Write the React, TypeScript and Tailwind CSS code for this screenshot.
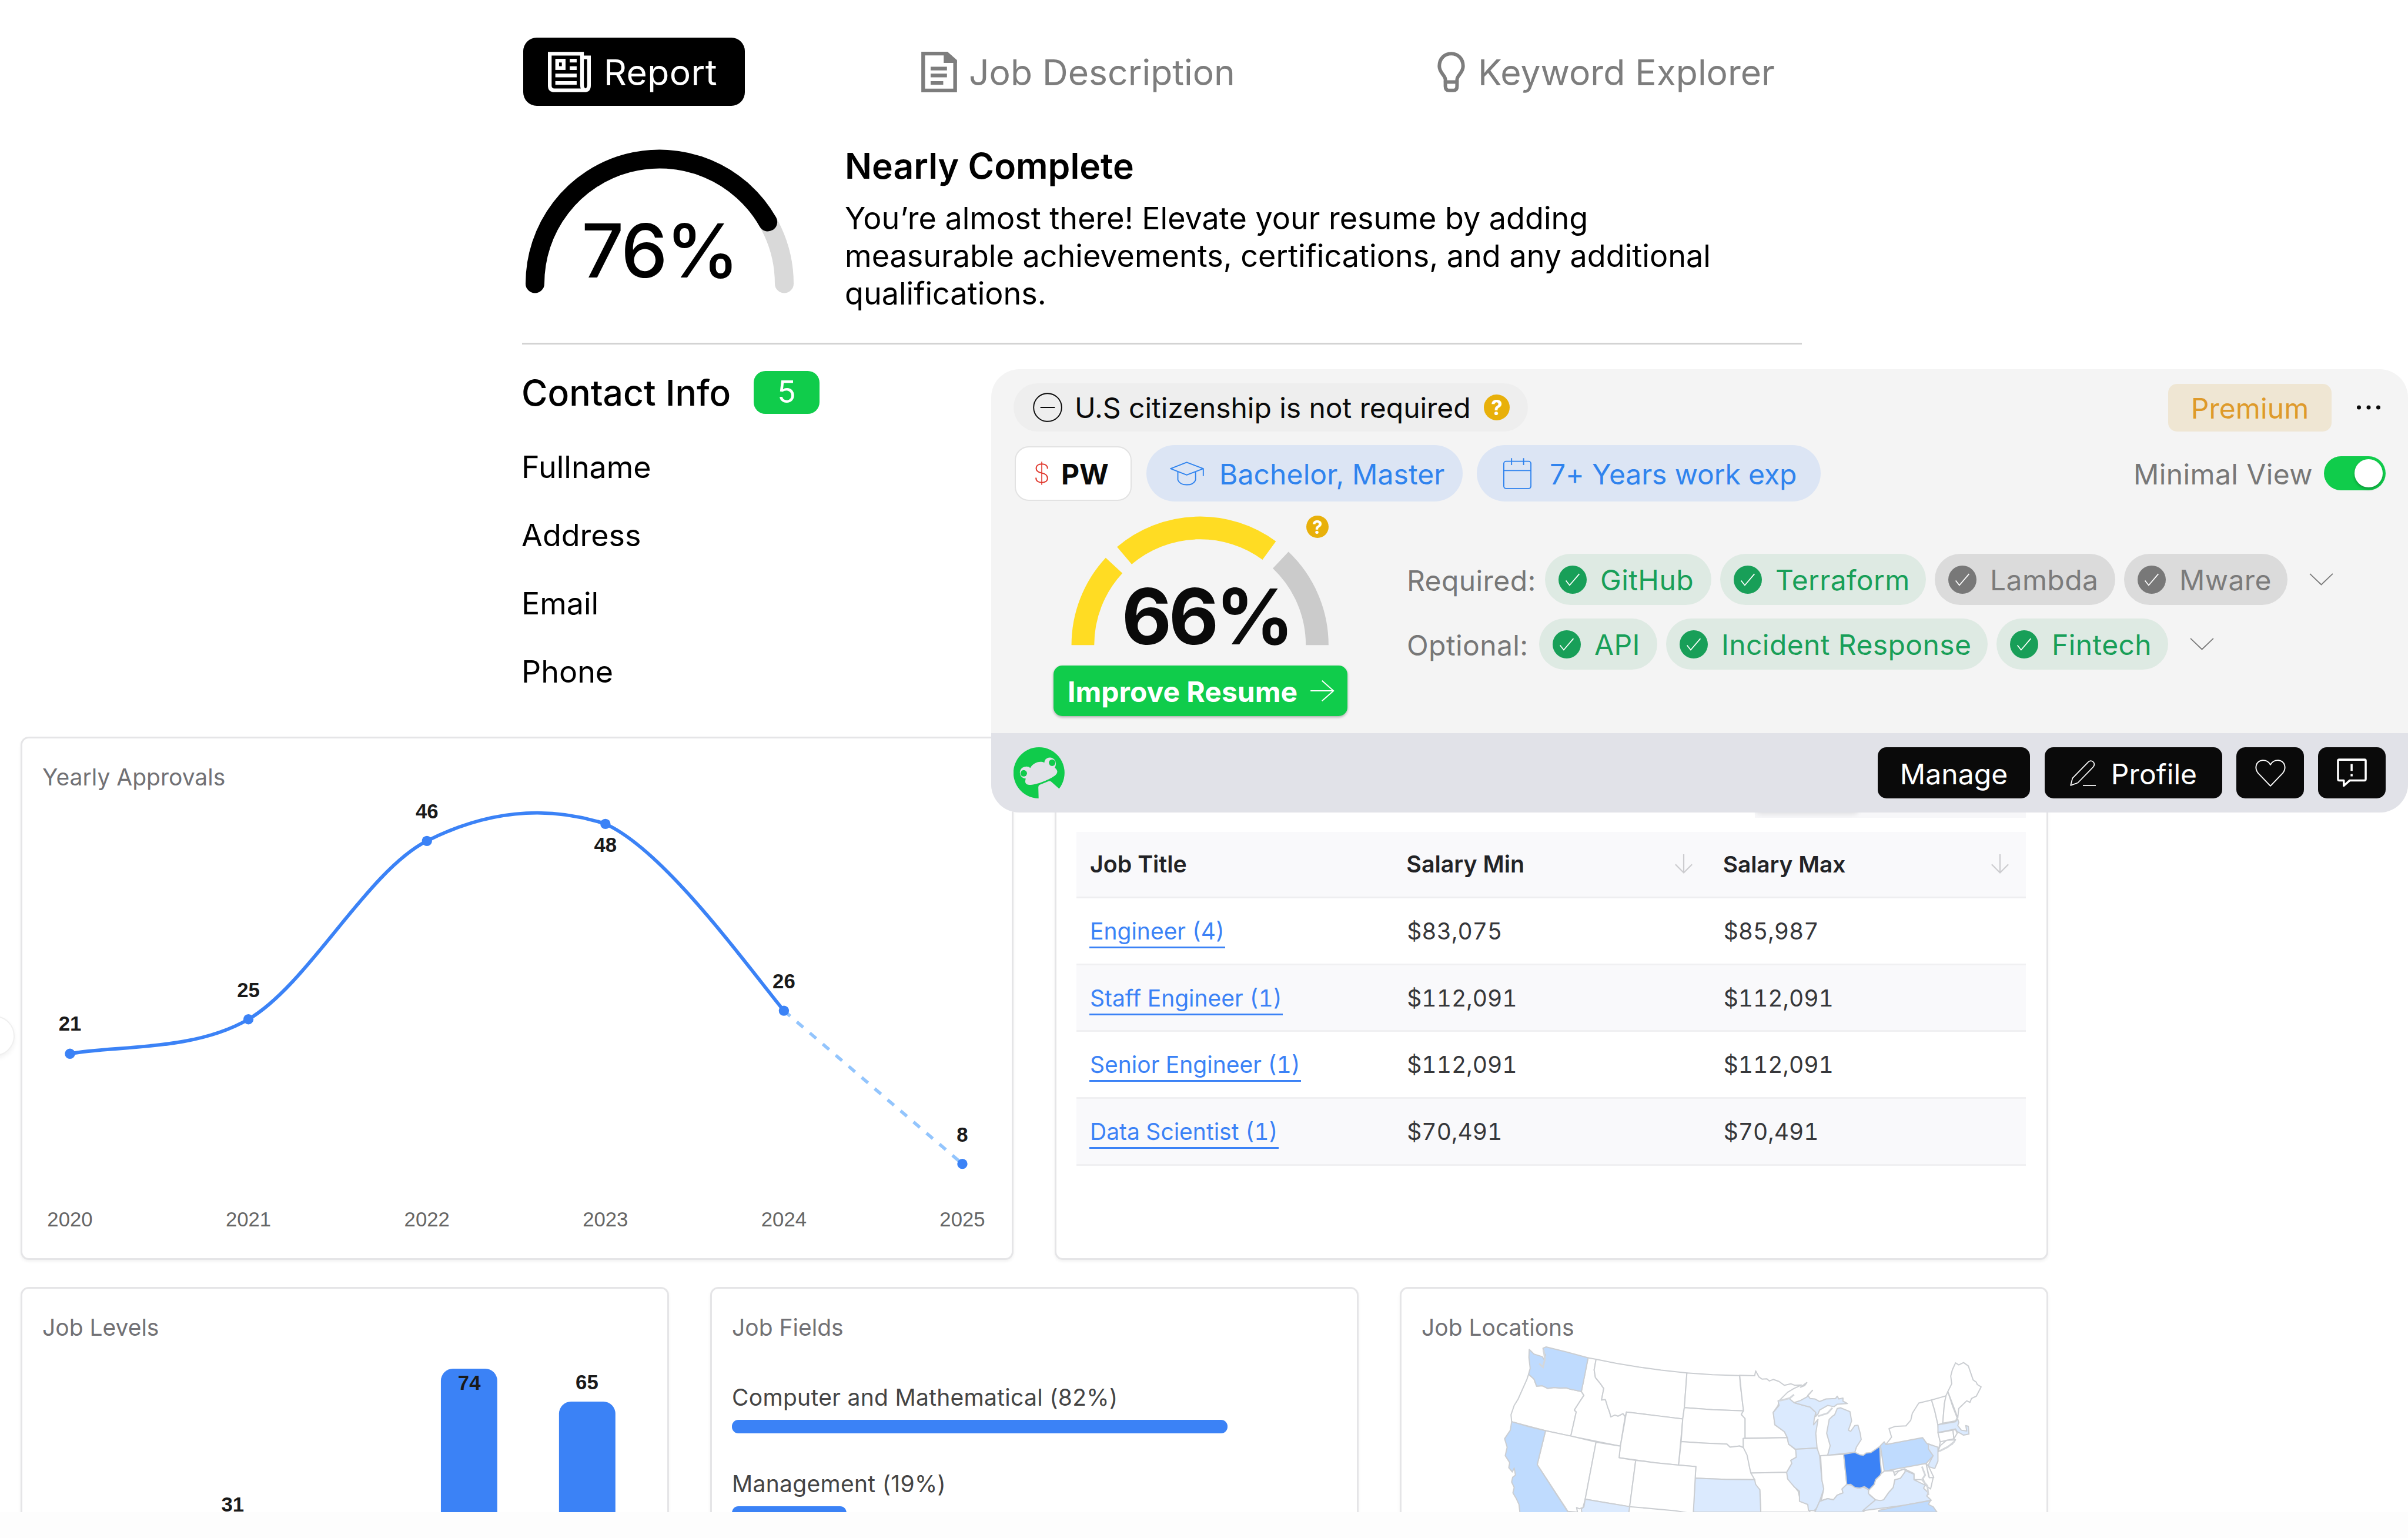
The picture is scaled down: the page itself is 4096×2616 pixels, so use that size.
import React from "react";

/* ---------- icons ---------- */

function NewsIcon() {
  return (
    <svg viewBox="0 0 92.5 87" className="h-[69px] w-[73px]" fill="none" stroke="currentColor" strokeWidth="8">
      <path d="M77.5 12H88.5V72Q88.5 83 79 83H14Q4 83 4 73V4H73.5V72Q73.5 80 80 83" />
      <rect x="20" y="19" width="14" height="16" />
      <path d="M47 19H62M47 35H62M16 51H62M16 67H62" />
    </svg>
  );
}

function DocIcon() {
  return (
    <svg viewBox="0 0 76.5 87" className="h-[69px] w-[61px]" fill="none" stroke="currentColor" strokeWidth="8">
      <path d="M4 4H54L72.5 21V83H4Z" />
      <path d="M48 0H56L76.5 18V24H48Z" fill="currentColor" stroke="none" />
      <path d="M20 36H55M20 51H55M20 67H47" />
    </svg>
  );
}

function BulbIcon() {
  return (
    <svg viewBox="0 0 59 87" className="h-[69px] w-[47px]" fill="none" stroke="currentColor" strokeWidth="7.5">
      <path d="M17 65V60C17 50 4 46 4 31C4 15 15 4 29.5 4S55 15 55 31C55 46 42 50 42 60V65" />
      <path d="M15 65H44M17 64V74Q17 83 25 83H34Q42 83 42 74V64" />
    </svg>
  );
}

function MinusCircle() {
  return (
    <svg viewBox="0 0 63 63" className="size-[50px]" fill="none" stroke="#0a0a0a" strokeWidth="2.4">
      <circle cx="31.5" cy="31.5" r="30" />
      <path d="M16 31.5H47" />
    </svg>
  );
}

function DollarIcon() {
  return (
    <svg viewBox="0 0 28 50" className="h-[40px] w-[22px]" fill="none" stroke="#e0372c" strokeWidth="2.6">
      <path d="M14 0V50" strokeWidth="2" />
      <path d="M26.5 15C26.5 8 21 5 14 5S2 8.500 2 14.500C2 21 7 23 14 24.500S26.500 29 26.500 35.500S21 45 14 45S1.500 42 1.500 34.500" />
    </svg>
  );
}

function CapIcon() {
  return (
    <svg viewBox="0 0 73 51" className="h-[41px] w-[58px]" fill="none" stroke="#2f83ee" strokeWidth="2.4" strokeLinejoin="round">
      <path d="M36 1.500L71.500 15L36 28.500L1.500 15ZM71.500 15V31M17 22V39Q21 49.500 36 49.500T55 39V22" />
    </svg>
  );
}

function CalendarIcon() {
  return (
    <svg viewBox="0 0 61 67" className="h-[53px] w-[48px]" fill="none" stroke="#2f83ee" strokeWidth="2.400">
      <rect x="1.200" y="7" width="58.600" height="58.800" rx="5" />
      <path d="M1 27H60M18 0V15M44 0V15" />
    </svg>
  );
}

function CheckDot({ color }: { color: string }) {
  return (
    <svg viewBox="0 0 61 61" className="size-[48px] shrink-0" fill="none">
      <circle cx="30.500" cy="30.500" r="30.500" fill={color} />
      <path d="M16 32.500L24 42.500L45 18" stroke="#fff" strokeWidth="2.200" />
    </svg>
  );
}

function Chevron() {
  return (
    <svg viewBox="0 0 52 27" className="ml-[22px] h-[21px] w-[41px]" fill="none" stroke="#777" strokeWidth="2.200">
      <path d="M1 1L26 25L51 1" />
    </svg>
  );
}

function RightArrow() {
  return (
    <svg viewBox="0 0 52 46" className="h-[36px] w-[41px]" fill="none" stroke="#fff" strokeWidth="2.400">
      <path d="M0 23H50M25 1L50 23L25 45" />
    </svg>
  );
}

function PencilIcon() {
  return (
    <svg viewBox="0 0 56 56" className="size-[44px]" fill="none" stroke="#fff" strokeWidth="2.200" strokeLinejoin="round">
      <path d="M1.500 54.500L5.500 39L39 4.500Q44 -1 49.500 3T51 14L17 49Z" />
      <path d="M28 54.800H56" />
    </svg>
  );
}

function HeartIcon() {
  return (
    <svg viewBox="0 0 65 58" className="h-[46px] w-[52px]" fill="none" stroke="#fff" strokeWidth="2.400" strokeLinejoin="round">
      <path d="M32.500 56.500L6.500 29.500C-3 18 2 3 15 1.500C23 0.800 29 5 32.500 11C36 5 42 0.800 50 1.500C63 3 68 18 58.500 29.500Z" />
    </svg>
  );
}

function FeedbackIcon() {
  return (
    <svg viewBox="0 0 65 62" className="h-[49px] w-[51px]" fill="none" stroke="#fff" strokeWidth="4.500" strokeLinejoin="round">
      <path d="M5 2.500H60Q62.500 2.500 62.500 5V44Q62.500 47.500 60 47.500H28L15 59V47.500H5Q2.500 47.500 2.500 44V5Q2.500 2.500 5 2.500Z" />
      <path d="M32 12V27M32 33.500V38.500" />
    </svg>
  );
}

function DownArrow() {
  return (
    <svg viewBox="0 0 38 42" className="h-[33px] w-[30px]" fill="none" stroke="#cccccf" strokeWidth="2.800">
      <path d="M19 0V40M1 22L19 40L37 22" />
    </svg>
  );
}

function FrogLogo() {
  return (
    <svg viewBox="72 60 330 330" className="size-[87px]">
      <path
        d="M234 390A165 165 0 1 1 366 327L316 283Q308 276 296 280L242 302Q232 306 232 318Z"
        fill="#10cb4b"
      />
      <path
        d="M150 185Q168 183 180 194C196 164 238 144 271 160C271 140 288 126 307 126C332 127 347 146 345 170Q344 184 338 192Q350 200 354 213C356 232 342 243 322 254C276 280 216 302 172 303Q152 302 148 286Q147 274 151 262C130 262 113 245 113 223C113 202 130 186 150 185Z"
        fill="#e1e2e8"
      />
      <circle cx="138" cy="228" r="21" fill="#10cb4b" />
      <circle cx="321" cy="160" r="21" fill="#10cb4b" />
    </svg>
  );
}

function Help({ small = false }: { small?: boolean }) {
  return (
    <span
      className={
        small
          ? "flex size-[38px] items-center justify-center rounded-full bg-[#e8b00a] text-[31px] leading-none font-bold text-white"
          : "flex size-[44px] items-center justify-center rounded-full bg-[#e8b00a] text-[35px] leading-none font-bold text-white"
      }
    >
      ?
    </span>
  );
}

/* ---------- gauges ---------- */

function arc(cx: number, cy: number, r: number, from: number, to: number) {
  const p = (a: number) => {
    const t = (a * Math.PI) / 180;
    return `${(cx - r * Math.cos(t)).toFixed(2)} ${(cy - r * Math.sin(t)).toFixed(2)}`;
  };
  return `M${p(from)}A${r} ${r} 0 0 1 ${p(to)}`;
}

function CompletionGauge() {
  return (
    <div className="relative mt-1 h-[246px] w-[456px]">
      <svg viewBox="0 0 456 246" className="h-full w-full" fill="none" strokeWidth="32" strokeLinecap="round">
        <path d={arc(228, 228.500, 212, 130, 180)} stroke="#d9d9d9" />
        <path d={arc(228, 228.500, 212, 0, 150.300)} stroke="#000" />
      </svg>
      <div className="absolute inset-x-0 top-[109px] text-center text-[126px] leading-[126px] font-[450] tracking-[-3px]">76%</div>
    </div>
  );
}

function MatchGauge() {
  return (
    <div className="relative h-[221px] w-[500px]">
      <svg viewBox="0 0 633.4 280" className="h-full w-full" fill="none" strokeWidth="49">
        <path d={arc(315.700, 279, 252.500, 0, 42.800)} stroke="#ffdc23" />
        <path d={arc(315.700, 279, 252.500, 49.800, 126.200)} stroke="#ffdc23" />
        <path d={arc(315.700, 279, 252.500, 133.500, 180)} stroke="#cbcbcb" />
      </svg>
      <div className="absolute top-[106px] left-[10px] w-full text-center text-[131px] leading-[132px] font-bold tracking-[-5px] text-[#0a0a0a]">
        66%
      </div>
      <div className="absolute top-0 right-[32px]">
        <Help small />
      </div>
    </div>
  );
}

/* ---------- resume report ---------- */

function ReportSection() {
  return (
    <section className="h-[1253px] w-[3065px] pt-[64px] pl-[888px] text-black">
      <nav className="flex h-[116px] items-center text-[60.6px] leading-none text-[#7d7d7d]">
        <div className="ml-[2px] flex h-full w-[377px] items-center gap-[22px] rounded-[23px] bg-black pl-[42px] text-white">
          <NewsIcon />
          <span className="pt-[3px] tracking-[0.400px]">Report</span>
        </div>
        <div className="ml-[300px] flex w-[878px] items-center gap-[20px]">
          <DocIcon />
          <span className="pt-[3px]">Job Description</span>
        </div>
        <div className="flex items-center gap-[22px] whitespace-nowrap">
          <BulbIcon />
          <span className="pt-[3px]">Keyword Explorer</span>
        </div>
      </nav>
      <div className="mt-[70px] flex h-[336px] border-b-[3px] border-[#d3d3d3] pl-[6px]">
        <div className="h-[300px]">
          <CompletionGauge />
        </div>
        <div className="ml-[87px]">
          <h2 className="text-[60.6px] leading-[64px] font-semibold">Nearly Complete</h2>
          <p className="mt-[26px] w-[1500px] text-[52.100px] leading-[64.2px]">
            You’re almost there! Elevate your resume by adding
            <br />
            measurable achievements, certifications, and any additional
            <br />
            qualifications.
          </p>
        </div>
      </div>
      <div className="-ml-px">
        <div className="mt-[45px] flex h-[72px] items-center">
          <h3 className="w-[395px] pt-[3px] text-[60.700px] leading-none font-medium">Contact Info</h3>
          <span className="flex h-[73px] w-[112px] items-center justify-center rounded-[20px] bg-[#10cc4b] text-[52px] leading-none text-white">
            5
          </span>
        </div>
        <ul className="mt-[34px] text-[52px] leading-[116px]">
          {["Fullname", "Address", "Email", "Phone"].map((f) => (
            <li key={f}>{f}</li>
          ))}
        </ul>
      </div>
    </section>
  );
}

/* ---------- floating job panel ---------- */

function Skill({ label, width, off = false }: { label: string; width: string; off?: boolean }) {
  return (
    <div
      className={`flex h-[87px] items-center gap-[23px] rounded-full pl-[23px] ${width} ${
        off ? "bg-[#dbdbdb] text-[#7b7b7b]" : "bg-[#deeae3] text-[#189f58]"
      }`}
    >
      <CheckDot color={off ? "#787878" : "#189f58"} />
      <span className="pt-[3px] whitespace-nowrap">{label}</span>
    </div>
  );
}

function JobPanel() {
  return (
    <aside className="absolute top-[628px] left-[1686px] h-[753.500px] w-[2410px] overflow-hidden rounded-[48px] bg-[#f4f4f4] text-[48px] leading-none tracking-[0.1px]">
      <div className="flex h-[619px] flex-col pt-[24px] pr-[38px] pl-[38px]">
        <div className="flex h-[82px] items-center">
          <div className="flex h-full w-[875px] items-center rounded-full bg-[#eeeeee] pr-[31px] pl-[33px] text-[#0a0a0a]">
            <MinusCircle />
            <span className="ml-[21px] pt-[2px] tracking-[-0.050px]">U.S citizenship is not required</span>
            <span className="ml-auto">
              <Help />
            </span>
          </div>
          <div className="ml-auto flex h-[81px] w-[278px] items-center justify-center rounded-[15px] bg-[#efe6d3] pt-[3px] text-[#de9a2a]">
            Premium
          </div>
          <svg viewBox="0 0 40 10" className="mr-[9px] ml-[43px] h-[10px] w-[40px]" fill="#0a0a0a">
            <circle cx="3.500" cy="5" r="3.500" />
            <circle cx="20" cy="5" r="3.500" />
            <circle cx="36.500" cy="5" r="3.500" />
          </svg>
        </div>

        <div className="mt-[23px] flex h-[96px] items-center pl-[2px]">
          <div className="flex h-[93px] w-[199px] items-center rounded-[24px] border-2 border-[#e2e2e2] bg-white pl-[33px] text-[#0a0a0a]">
            <DollarIcon />
            <span className="ml-[22px] pt-[4px] font-bold tracking-normal">PW</span>
          </div>
          <div className="ml-[25px] flex h-full w-[538px] items-center gap-[26px] rounded-full bg-[#dce5f4] pl-[40px] text-[#2f83ee]">
            <CapIcon />
            <span className="pt-[4px]">Bachelor, Master</span>
          </div>
          <div className="ml-[24px] flex h-full w-[585px] items-center gap-[31px] rounded-full bg-[#dce5f4] pl-[45px] text-[#2f83ee]">
            <CalendarIcon />
            <span className="pt-[4px] tracking-[-0.1px]">7+ Years work exp</span>
          </div>
          <span className="ml-auto pt-[4px] tracking-[0.400px] text-[#777]">Minimal View</span>
          <div className="ml-[19px] flex h-[58px] w-[105px] items-center justify-end rounded-full bg-[#10cc4b] p-[5px]">
            <span className="size-[48px] rounded-full bg-white shadow-[0_3px_4px_rgba(0,0,0,0.25)]" />
          </div>
        </div>

        <div className="flex">
          <div className="mt-[24px] ml-[68px] w-[500px]">
            <MatchGauge />
            <div className="mt-[34px] flex h-[86px] items-center rounded-[15px] bg-[#10cc4b] pl-[24px] text-[48px] font-bold text-white shadow-[0_2px_4px_rgba(0,0,0,0.3)]">
              <span className="pt-[4px] tracking-normal">Improve Resume</span>
              <span className="mr-[22px] ml-auto">
                <RightArrow />
              </span>
            </div>
          </div>
          <div className="mt-[89px] ml-[101px] tracking-[0.400px]">
            <div className="flex h-[87px] items-center gap-[15px]">
              <span className="w-[220px] pt-[4px] text-[#777]">Required:</span>
              <Skill label="GitHub" width="w-[283px]" />
              <Skill label="Terraform" width="w-[350px]" />
              <Skill label="Lambda" width="w-[307px]" off />
              <Skill label="Mware" width="w-[278px]" off />
              <Chevron />
            </div>
            <div className="mt-[23px] flex h-[87px] items-center gap-[15px]">
              <span className="w-[210px] pt-[4px] text-[#777]">Optional:</span>
              <Skill label="API" width="w-[201px]" />
              <Skill label="Incident Response" width="w-[547px]" />
              <Skill label="Fintech" width="w-[292px]" />
              <Chevron />
            </div>
          </div>
        </div>
      </div>

      <footer className="flex h-[135px] items-center bg-[#e1e2e8] pr-[38px] pl-[38px] text-white">
        <FrogLogo />
        <button className="ml-auto h-[87px] w-[259px] rounded-[15px] bg-[#0a0a0a] pt-[4px]">Manage</button>
        <button className="ml-[25px] flex h-[87px] w-[302px] items-center justify-center gap-[26px] rounded-[15px] bg-[#0a0a0a]">
          <PencilIcon />
          <span className="pt-[4px]">Profile</span>
        </button>
        <button className="ml-[24px] flex h-[87px] w-[115px] items-center justify-center rounded-[15px] bg-[#0a0a0a]">
          <HeartIcon />
        </button>
        <button className="ml-[24px] flex h-[87px] w-[115px] items-center justify-center rounded-[15px] bg-[#0a0a0a]">
          <FeedbackIcon />
        </button>
      </footer>
    </aside>
  );
}

/* ---------- dashboard cards ---------- */

function Card({ title, className, children }: { title?: string; className: string; children: React.ReactNode }) {
  return (
    <div
      className={`overflow-hidden rounded-[14px] border-[3px] border-[#e5e5e7] bg-white shadow-[0_3px_5px_rgba(0,0,0,0.05)] ${className}`}
    >
      {title && (
        <h4 className="mt-[42px] pl-[34px] text-[39px] leading-[48px] text-[#717175]">{title}</h4>
      )}
      {children}
    </div>
  );
}

const approvals = [
  { year: "2020", n: 21, x: 150.700, y: 2270.200, ly: 2220.500 },
  { year: "2021", n: 25, x: 535.200, y: 2196, ly: 2147.800 },
  { year: "2022", n: 46, x: 919.800, y: 1811.800, ly: 1763.600 },
  { year: "2023", n: 48, x: 1304.300, y: 1775, ly: 1836 },
  { year: "2024", n: 26, x: 1688.900, y: 2177.600, ly: 2128.600 },
  { year: "2025", n: 8, x: 2073.400, y: 2507.500, ly: 2460 },
];

function ApprovalsChart() {
  return (
    <svg viewBox="48.1 1704.9 2129.2 1003.2" preserveAspectRatio="none" className="h-[792px] w-[1681px]">
      <path
        d="M150.700 2270.200C245 2252 415 2266 535.200 2196C665 2120 790 1878 919.800 1811.800C1048 1747 1178 1734 1304.300 1775C1430 1832 1600 2068 1688.900 2177.600"
        fill="none"
        stroke="#3b82f6"
        strokeWidth="7.500"
      />
      <path d="M1688.900 2177.600L2073.400 2507.500" fill="none" stroke="#93c5fd" strokeWidth="7" strokeDasharray="18 18.800" />
      {approvals.map((p) => (
        <g key={p.year} textAnchor="middle" fontFamily="Liberation Sans, sans-serif" fontSize="44">
          <circle cx={p.x} cy={p.y} r="11" fill="#3b82f6" />
          <text x={p.x} y={p.ly} fontWeight="bold" fill="#1a1a1a">
            {p.n}
          </text>
          <text x={p.x} y="2642" fill="#666">
            {p.year}
          </text>
        </g>
      ))}
    </svg>
  );
}

const rows = [
  ["Engineer (4)", "$83,075", "$85,987"],
  ["Staff Engineer (1)", "$112,091", "$112,091"],
  ["Senior Engineer (1)", "$112,091", "$112,091"],
  ["Data Scientist (1)", "$70,491", "$70,491"],
];

function SalaryTable() {
  return (
    <div className="flex flex-col pr-[35px] pl-[34px]">
      <div className="mt-[55px] flex h-[80px] w-[461px] self-end bg-[#f7f7f9] pl-[2px]">
        <div className="h-[69px] w-[174px] rounded-[8px] bg-white shadow-[0_4px_10px_rgba(0,0,0,0.11)]" />
      </div>
      <div className="mt-[24px] text-[39px] leading-none text-[#36373a]">
        <div className="grid h-[113px] grid-cols-3 items-center border-b-[3px] border-[#eeeef0] bg-[#f9f9fb] text-[39.300px] font-semibold text-[#222326]">
          <div className="pl-[23px]">Job Title</div>
          <div className="flex items-center justify-between pr-[29px] pl-[23px]">
            Salary Min <DownArrow />
          </div>
          <div className="flex items-center justify-between pr-[29px] pl-[23px] text-[38.800px]">
            Salary Max <DownArrow />
          </div>
        </div>
        {rows.map(([title, min, max], i) => (
          <div
            key={title}
            className={`grid h-[113.700px] grid-cols-3 items-center border-b-[3px] border-[#f0f0f2] tabular-nums ${
              i % 2 ? "bg-[#f9f9fb]" : "bg-white"
            }`}
          >
            <div className="pt-[10px] pl-[22px]">
              <span className="inline-block border-b-[3px] border-[#3b82f6] px-[1px] pb-[7px] text-[#3b82f6]">
                {title}
              </span>
            </div>
            <div className="pl-[24px]">{min}</div>
            <div className="pl-[24px]">{max}</div>
          </div>
        ))}
      </div>
    </div>
  );
}

function LevelsChart() {
  const label = { textAnchor: "middle" as const, fontWeight: "bold", fontSize: 44, fill: "#1a1a1a" };
  return (
    <svg viewBox="48.1 2892 1387 380" className="mt-px h-[300px] w-[1095px]" fontFamily="Liberation Sans, sans-serif">
      <rect x="949.900" y="2949" width="121.500" height="400" rx="26" fill="#3b82f6" />
      <rect x="1204.400" y="3020" width="121.500" height="400" rx="26" fill="#3b82f6" />
      <text x="501.300" y="3256.600" {...label}>31</text>
      <text x="1011" y="2994.500" {...label}>74</text>
      <text x="1264.600" y="2993" {...label}>65</text>
    </svg>
  );
}

const fields = [
  { name: "Computer and Mathematical", pct: 82 },
  { name: "Management", pct: 19 },
];

function FieldsList() {
  return (
    <div className="mt-[71px] w-[1062px] pl-[34px]">
      {fields.map((f) => (
        <div key={f.name} className="h-[147px]">
          <div className="text-[39px] leading-[48px] tracking-[0.300px] text-[#444]">
            {f.name} ({f.pct}%)
          </div>
          <div className="mt-[14px] h-[23px] rounded-[11px] bg-[#3b82f6]" style={{ width: `${f.pct}%` }} />
        </div>
      ))}
    </div>
  );
}

const W = "#ffffff";
const L1 = "#dbeafe";
const L2 = "#bfdbfe";

/* State outlines of the northern half of the map. */
const states: [string, string, string][] = [
  ["OR", W, "105,218 122,250 130,295 148,293 165,310 185,304 205,308 222,306 235,315 270,330 278,355 265,395 248,450 254,462 252,480 237,618 158,583 52,525 50,480 60,420 72,380 100,250"],
  ["ID", W, "291,112 316,122 310,190 314,240 328,275 340,310 333,385 345,382 348,400 362,490 375,482 385,489 400,473 407,492 392,683 237,618 252,480 254,462 248,450 265,395 278,355 270,330"],
  ["MT", W, "316,122 380,148 450,172 520,192 600,210 592,434 587,507 500,485 411,463 407,492 400,473 385,489 375,482 362,494 358,460 352,430 348,400 345,382 333,385 340,310 328,275 314,240 310,190"],
  ["WY", W, "411,463 500,485 587,507 574,806 500,790 440,772 388,758 392,683"],
  ["ND", W, "600,210 680,221 765,227 767,290 771,350 777,455 680,447 592,434"],
  ["SD", W, "592,434 680,447 777,455 770,478 782,505 782,632 776,634 779,694 765,682 735,690 725,670 650,663 582,654 587,507"],
  ["MN", W, "765,225 812,228 815,197 825,235 835,250 850,248 858,262 870,252 888,265 905,290 925,280 938,290 958,288 935,310 915,335 888,390 885,420 870,465 875,545 905,590 914,628 782,632 782,505 770,478 777,455 771,350"],
  ["NE", W, "582,654 650,663 725,670 735,690 765,682 779,695 790,745 797,830 812,900 720,898 626,890 628,815 574,806"],
  ["IA", W, "776,634 914,628 918,670 945,715 942,755 925,775 928,795 912,852 800,857 797,830 788,740 776,690"],
  ["MO", W, "800,857 912,852 920,905 948,975 952,1010 978,1060 985,1110 831,1110 828,965 812,930 812,900"],
  ["KS", L1, "626,890 720,898 812,900 815,930 828,965 831,1110 620,1110"],
  ["NV", W, "158,583 237,618 316,657 282,1026 275,1080 264,1088 255,1080 258,1110 228,1105 132,803"],
  ["UT", W, "316,657 392,683 388,758 440,775 421,1074 350,1050 282,1026"],
  ["CO", W, "440,775 500,790 574,806 628,815 626,890 620,1120 565,1101 421,1074"],
  ["AZ", L1, "282,1026 350,1050 421,1074 418,1120 272,1120 270,1090 278,1075"],
  ["CA", L2, "52,525 105,557 158,583 132,803 230,1115 78,1115 75,1060 66,1020 56,985 60,950 52,915 55,885 64,870 60,825 54,850 43,822 46,790 32,745 38,690 30,635 48,580"],
  ["WA", L2, "107,58 122,88 148,105 152,120 158,95 152,75 150,50 160,42 225,75 291,112 281,220 270,330 235,315 222,306 205,308 185,304 165,310 148,293 130,295 122,250 105,218 110,180 106,110"],
  ["WI", L1, "885,390 920,375 935,402 965,420 985,430 1003,465 998,510 996,545 1010,510 1003,600 1007,695 940,703 918,670 914,628 905,590 875,545 870,465 888,420"],
  ["UP", L1, "935,402 955,388 975,365 993,322 978,355 985,375 1000,378 1015,395 1035,378 1065,375 1070,360 1075,378 1088,372 1088,392 1102,408 1070,412 1060,428 1040,420 1015,450 1010,475 1003,490 1003,465 985,430 965,420"],
  ["MI", L1, "1080,435 1110,460 1115,520 1105,580 1112,588 1125,550 1135,548 1142,600 1145,640 1130,690 1125,723 1040,742 1048,680 1037,600 1045,510 1055,490 1062,480 1070,440"],
  ["Isle", L1, "955,302 975,272 968,292"],
  ["IL", L1, "940,703 1007,695 1015,745 1022,900 1028,960 1015,1040 1005,1085 998,1100 980,1098 978,1060 952,1040 952,975 935,945 915,895 912,852 928,795 925,775 942,755"],
  ["IN", W, "1018,745 1040,742 1090,735 1100,930 1085,960 1088,985 1070,1000 1058,1030 1040,1022 1020,1035 1028,960 1022,900"],
  ["KY", L1, "1100,930 1115,935 1135,955 1152,948 1168,965 1172,1000 1190,1030 1175,1070 1150,1110 1000,1110 1015,1040 1040,1022 1058,1030 1070,1000 1088,985 1085,960"],
  ["PA", L2, "1205,680 1217,655 1222,673 1337,628 1350,665 1360,680 1355,700 1370,745 1348,795 1217,845"],
  ["NY", W, "1222,673 1240,625 1232,570 1250,556 1285,552 1300,515 1305,470 1325,405 1365,385 1375,455 1385,545 1387,600 1392,660 1385,720 1384,690 1350,665 1337,628"],
  ["VT", W, "1365,385 1410,358 1405,410 1400,535 1385,545 1375,455"],
  ["NH", W, "1410,358 1416,330 1430,420 1445,500 1440,520 1400,535 1405,410"],
  ["ME", W, "1416,330 1428,280 1425,230 1430,190 1440,145 1450,158 1465,143 1480,165 1495,255 1505,270 1508,285 1520,300 1505,360 1490,375 1485,400 1475,390 1460,420 1450,440 1447,500"],
  ["MA", L1, "1385,545 1440,525 1447,508 1450,530 1447,550 1458,580 1475,585 1472,550 1480,555 1482,605 1465,612 1455,600 1445,590 1440,572 1385,595"],
  ["CT", W, "1385,597 1432,580 1435,635 1392,655"],
  ["RI", W, "1432,580 1440,575 1445,600 1435,635"],
  ["LI", W, "1385,720 1392,680 1412,645 1440,642 1430,670"],
  ["NJ", L1, "1355,670 1385,690 1385,780 1375,828 1355,815 1357,795 1370,745 1355,700"],
  ["MD", W, "1217,845 1348,795 1356,880 1370,888 1362,960 1345,935 1340,900 1310,900 1310,860 1280,830 1250,850"],
  ["DE", W, "1348,795 1356,815 1372,885 1358,887"],
  ["VA", L1, "1282,840 1310,865 1310,900 1345,935 1340,955 1355,985 1350,1005 1364,1033 1280,1065 1150,1100 1190,1030 1215,1030 1230,985 1245,950 1250,900 1268,890"],
  ["WV", W, "1208,860 1217,845 1245,842 1250,872 1262,845 1282,830 1282,850 1268,890 1250,900 1245,950 1230,985 1215,1030 1205,1035 1190,1030 1168,990 1168,965 1185,930 1190,900"],
  ["OH", "#3b82f6", "1090,735 1125,723 1140,738 1152,742 1160,728 1175,725 1203,685 1205,780 1208,850 1205,870 1190,900 1186,930 1170,965 1155,945 1140,955 1125,950 1112,930 1100,932"],
  ["NC", L2, "1200,1098 1280,1065 1362,1035 1355,1060 1370,1075 1382,1110 1200,1110"],
];

function LocationsMap() {
  return (
    <svg viewBox="0 0 1568 1140" preserveAspectRatio="none" className="-mt-[2px] ml-[159px] h-[300px] w-[853px]">
      <g stroke="#cbced2" strokeWidth="2" strokeLinejoin="round">
        {states.map(([id, fill, points]) => (
          <polygon key={id} points={points} fill={fill} vectorEffect="non-scaling-stroke" />
        ))}
      </g>
      <g fill="none" stroke="#d4d7db" strokeWidth="3">
        <path d="M152 60L156 120L150 172L138 150M888 390L900 385L922 372L935 350M1055 435L1040 470L1010 490M1335 815L1345 870L1335 900L1352 940L1355 1000M1390 715L1415 690L1438 650" vectorEffect="non-scaling-stroke" />
      </g>
    </svg>
  );
}

export default function App() {
  return (
    <main className="relative h-[2616px] w-[4096px] overflow-hidden bg-white font-['Inter',sans-serif]">
      <ReportSection />
      <div className="flex gap-[70px] pl-[35px]">
        <Card title="Yearly Approvals" className="h-[890px] w-[1689px]">
          <ApprovalsChart />
        </Card>
        <Card className="h-[890px] w-[1690px]">
          <SalaryTable />
        </Card>
      </div>
      <div className="mt-[46px] flex h-[383px] gap-[70px] overflow-hidden pl-[35px]">
        <Card title="Job Levels" className="h-[900px] w-[1103px]">
          <LevelsChart />
        </Card>
        <Card title="Job Fields" className="h-[900px] w-[1103px]">
          <FieldsList />
        </Card>
        <Card title="Job Locations" className="h-[900px] w-[1103px]">
          <LocationsMap />
        </Card>
      </div>
      <div className="h-[44px] bg-[#fdfdfd]" />
      <JobPanel />
      <div className="absolute top-[1728px] -left-[43px] size-[68px] rounded-full border-2 border-[#efefef] bg-white shadow-[0_4px_8px_rgba(0,0,0,0.06)]" />
    </main>
  );
}
